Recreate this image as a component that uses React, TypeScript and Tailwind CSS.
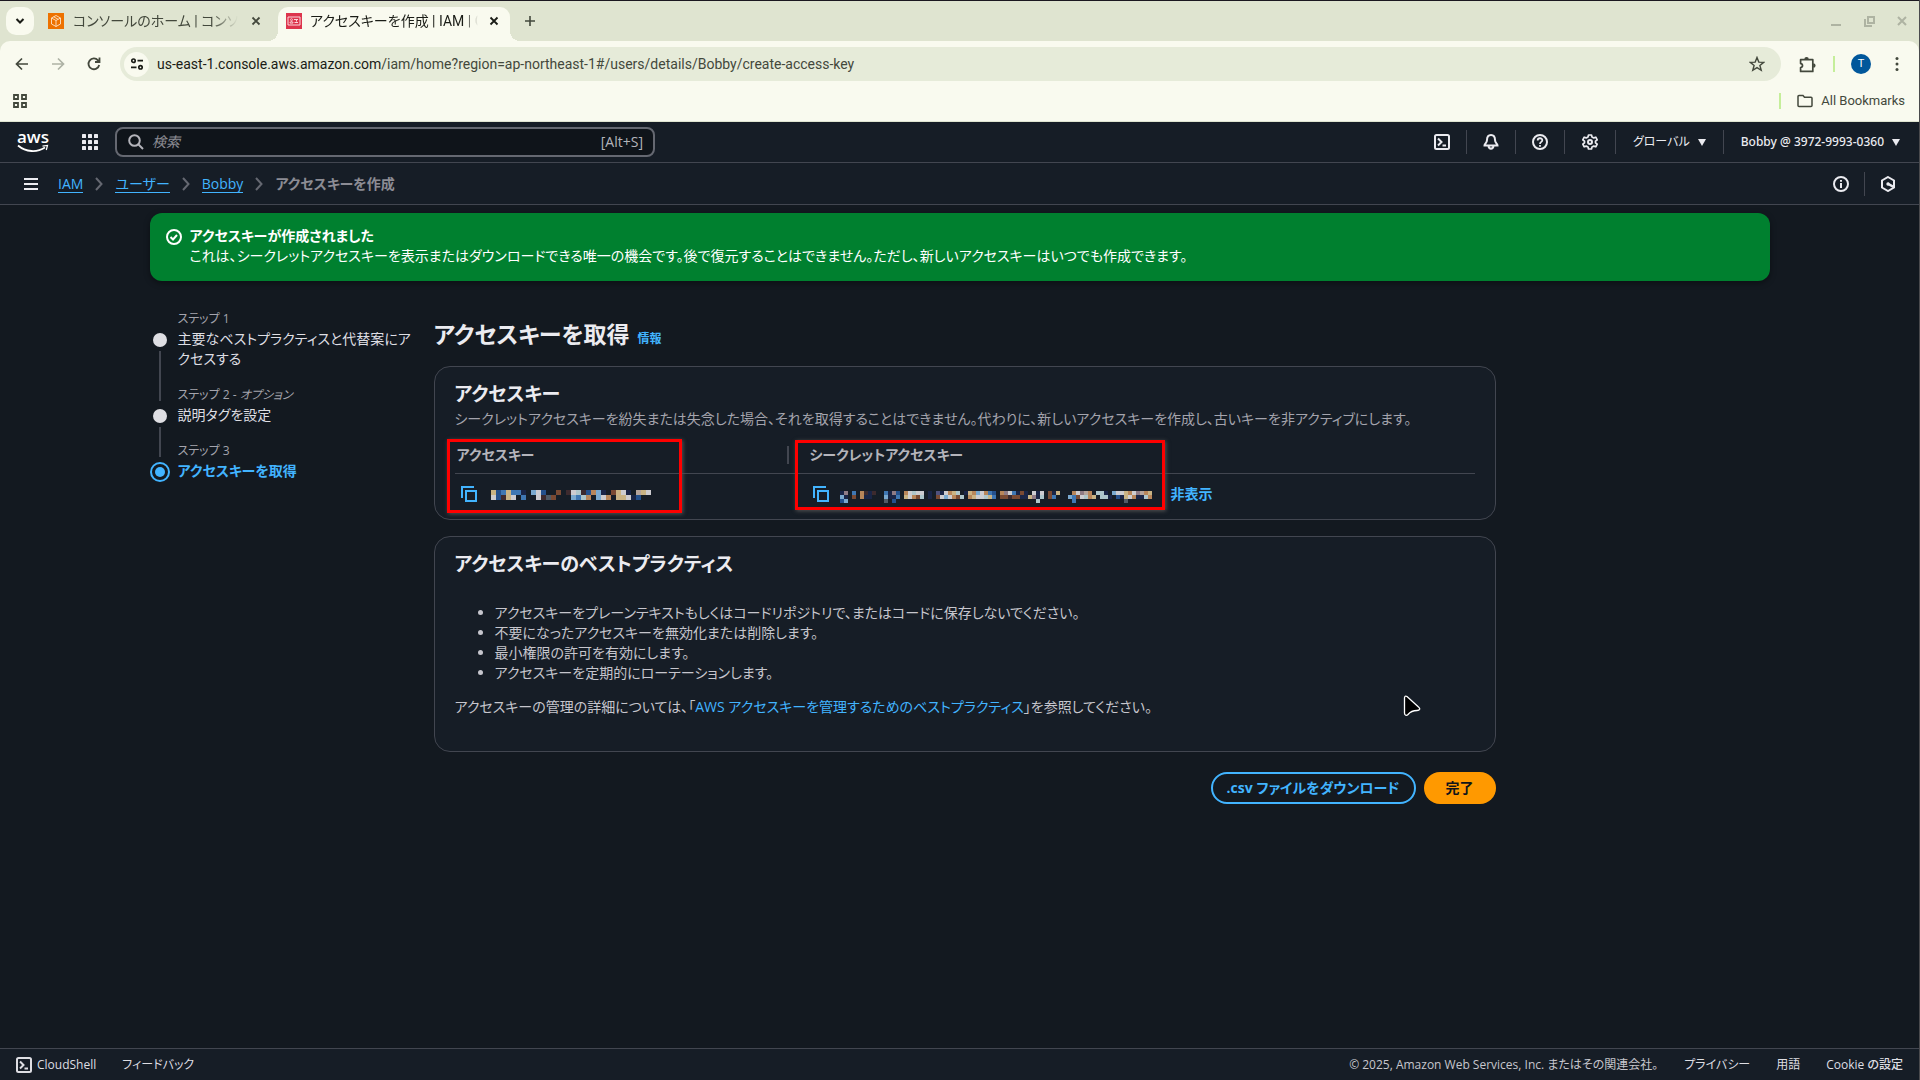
import React from 'react';

const P = {
  n: 'transparent', w: '#cdccd0', s: '#aec6cb', b: '#3f77b3', d: '#24508c', k: '#1a2547', r: '#3d2a2e',
  o: '#7a4a33', t: '#c9b384', c: '#b8865a', g: '#4f5a66', m: '#7aa9cf', v: '#8f7b85', u: '#50517d', p: '#b5a49c',
} as Record<string, string>;

const ACCESS = [
  'tdbtbbknmwdnnonrwsrdcmknotwknptw',
  'wdrtwnbnnwrgonnnmbscnmwcnttwkdnn',
];
const SECRET = [
  'kvnbncrkrnnbkvdncwswwnknukwctsnktcmwcbdncvwbkoknwkwnoktnnncwvpcnssknmwwtcwvpctn',
  'mknonckknnnmkkbntwcosnknowmwcosnctwwstbnoorookktvksnobnnnmbowsctnsskndktwckkscn',
  'dmnnnnnnnnngndnnnnnnnnnnnnnnnnnnnnnnnnnnnnnnnnnnnsnnnnnnnnbnnnnnnnnnnnngnnnnnnn',
];

function Mosaic({ rows, cell }: { rows: string[]; cell: number }) {
  const w = rows[0].length;
  return (
    <svg width={w * cell} height={rows.length * cell} shapeRendering="crispEdges" aria-hidden="true">
      {rows.map((r, y) => r.split('').map((ch, x) => (
        <rect key={x + '-' + y} x={x * cell} y={y * cell} width={cell} height={cell} fill={P[ch]} />
      )))}
    </svg>
  );
}

type IP = { children: React.ReactNode; className?: string; sw?: number };
function Icon({ children, className = 'size-4', sw = 2 }: IP) {
  return (
    <svg viewBox="0 0 16 16" className={className} fill="none" stroke="currentColor" strokeWidth={sw} aria-hidden="true">
      {children}
    </svg>
  );
}

const Shell = () => <Icon><rect x="1" y="1" width="14" height="14" rx="1.5" /><path d="M4 4.5 7.5 8 4 11.5M8.5 11.5H12" /></Icon>;
const Copy = () => <Icon><path d="M13 1H1v11" /><path d="M5 5h10v10H5z" /></Icon>;
const Close = ({ className }: { className?: string }) => <Icon className={className} sw={1.8}><path d="m4.500 4.500 7 7M11.500 4.500l-7 7" /></Icon>;
const Sep = () => <span className="h-6 w-px bg-[#424650]" />;
const Chevron = () => <Icon className="mx-2 size-4 text-[#656871]"><path d="m5 2 5.500 6L5 14" /></Icon>;
const Tri = () => <svg viewBox="0 0 8 7" className="h-[7px] w-2" fill="currentColor" aria-hidden="true"><path d="M0 0h8L4 7z" /></svg>;

function Browser() {
  return (
    <header className="font-['Roboto','Noto_Sans_CJK_JP',sans-serif] bg-[#dfe4d0] text-[#43483c]">
      <div className="h-px bg-[#1b1720]" />
      <div className="flex h-10 items-end">
        <button aria-label="タブを検索" className="mb-1.5 ml-1.5 flex h-7 w-7 items-center justify-center rounded-[10px] bg-[#f9faef] text-[#1a1c16]">
          <Icon className="size-4"><path d="m4.500 6 3.500 3.500L11.500 6" /></Icon>
        </button>
        <div className="flex h-[34px] w-[244px] items-center pb-1.5 pl-3.5 pt-0">
          <svg viewBox="0 0 16 16" className="size-4 shrink-0" aria-hidden="true"><rect width="16" height="16" fill="#ed7100" /><path d="M8 2.500 12.500 5v6L8 13.500 3.500 11V5zM3.500 5 8 7.500 12.500 5M8 7.500v6M5.700 3.800l4.500 2.500" fill="none" stroke="#fde3c8" strokeWidth=".9" /></svg>
          <span className="ml-[9px] w-[165px] overflow-hidden whitespace-nowrap text-sm [mask-image:linear-gradient(90deg,#000_84%,transparent)] [font-feature-settings:'palt']">コンソールのホーム | コンソール</span>
          <button aria-label="タブを閉じる" className="ml-2.5"><Close className="size-4" /></button>
        </div>
        <div className="relative flex h-[34px] w-[232px] items-center rounded-t-[10px] bg-[#f9faef] pb-1.5 pl-2 text-[#1a1c16]">
          <span className="absolute -left-2.5 bottom-0 size-2.5 bg-[radial-gradient(circle_at_0_0,transparent_10px,#f9faef_10px)]" />
          <span className="absolute -right-2.5 bottom-0 size-2.5 bg-[radial-gradient(circle_at_100%_0,transparent_10px,#f9faef_10px)]" />
          <svg viewBox="0 0 16 16" className="size-4 shrink-0" aria-hidden="true"><rect width="16" height="16" fill="#dd344c" /><path d="M2 4h12v8H2z" fill="none" stroke="#fbd5da" /><path d="M8 6.500h4M10.500 6.500v2M8.500 9.500h3.500M4 10c0-2 3-2 3 0z" fill="none" stroke="#fbd5da" /><circle cx="5.500" cy="6.700" r="1" fill="none" stroke="#fbd5da" strokeWidth=".8" /></svg>
          <span className="ml-2 w-[168px] overflow-hidden whitespace-nowrap text-sm [mask-image:linear-gradient(90deg,#000_92%,transparent)] [font-feature-settings:'palt']">アクセスキーを作成 | IAM | Global</span>
          <button aria-label="タブを閉じる" className="ml-2"><Close className="size-4" /></button>
        </div>
        <button aria-label="新しいタブ" className="mb-3 ml-3"><Icon className="size-4" sw={1.6}><path d="M8 3v10M3 8h10" /></Icon></button>
        <div className="mb-3 ml-auto mr-[9px] flex items-center gap-[17px] text-[#aeb3a2]">
          <button aria-label="最小化"><Icon><path d="M3 12h10" /></Icon></button>
          <button aria-label="元に戻す"><Icon><path d="M7 4h6v6H7zM4 6v7h7" /></Icon></button>
          <button aria-label="閉じる"><Icon><path d="m4 4 8 8M12 4l-8 8" /></Icon></button>
        </div>
      </div>
      <div className="rounded-t-[10px] border-b border-[#dfe4d0] bg-[#f9faef]">
        <div className="flex h-[46px] items-center pr-3.5 pt-0">
          <button aria-label="戻る" className="ml-3.5"><Icon sw={1.7}><path d="M14 8H3M8 2.500 2.500 8 8 13.500" /></Icon></button>
          <button aria-label="進む" className="ml-5 text-[#aeb2a5]"><Icon sw={1.7}><path d="M2 8h11M8 2.500 13.500 8 8 13.500" /></Icon></button>
          <button aria-label="再読み込み" className="ml-5"><Icon sw={1.8}><path d="M13.200 9A5.400 5.400 0 1 1 12 4.300l1 1M13.500 1.500V6H9" /></Icon></button>
          <div className="ml-[18px] flex h-[34px] flex-1 items-center rounded-full bg-[#e6ebd9] pl-1 pr-4">
            <span className="flex size-[25px] items-center justify-center rounded-full bg-[#f9faef] text-[#1a1c16]"><Icon className="size-4" sw={1.7}><circle cx="4.500" cy="4.700" r="1.700" /><path d="M8.500 4.700H14M2 11.300h5.500" /><circle cx="11.500" cy="11.300" r="1.700" /></Icon></span>
            <span className="ml-2 whitespace-nowrap text-sm text-[#1a1c16]">us-east-1.console.aws.amazon.com<span className="text-[#43483c]">/iam/home?region=ap-northeast-1#/users/details/Bobby/create-access-key</span></span>
            <button aria-label="ブックマークに追加" className="ml-auto"><Icon sw={1.400}><path d="m8 1.500 1.800 4.600 4.900.3-3.800 3.100 1.300 4.800L8 11.600l-4.200 2.700 1.300-4.800L1.300 6.400l4.900-.3z" /></Icon></button>
          </div>
          <button aria-label="拡張機能" className="ml-[18px]"><Icon className="size-[17px]" sw={1.600}><path d="M1.500 3.500H13v4.200V14.500H1.500v-3.600c2.400-.2 2.400-3.600 0-3.800z" strokeLinejoin="round" /><path d="M5.800 3a1.300 1.300 0 0 1 2.600 0M13.500 7.600a1.300 1.300 0 0 1 0 2.600" fill="currentColor" /></Icon></button>
          <span className="ml-[17px] h-4 w-0.5 bg-[#c5ee9a]" />
          <span className="ml-4 flex size-5 items-center justify-center rounded-full bg-[#01579b] text-[11px] text-white">T</span>
          <button aria-label="メニュー" className="ml-[18px]"><Icon><g fill="currentColor" stroke="none"><circle cx="8" cy="2.500" r="1.500" /><circle cx="8" cy="8" r="1.500" /><circle cx="8" cy="13.500" r="1.500" /></g></Icon></button>
        </div>
        <div className="flex h-[34px] items-center justify-between pb-1.5 pl-3 pr-[14px]">
          <button aria-label="アプリ"><Icon sw={1.800}><path d="M2 2h4v4H2zM10 2h4v4h-4zM2 10h4v4H2zM10 10h4v4h-4z" /></Icon></button>
          <div className="flex items-center">
            <span className="mr-4 h-4 w-0.5 bg-[#c5ee9a]" />
            <button className="flex items-center gap-2 whitespace-nowrap text-[13px]"><Icon className="size-4" sw={1.500}><path d="M1 3.500a1 1 0 0 1 1-1h4l1.500 1.800H14a1 1 0 0 1 1 1v7.200a1 1 0 0 1-1 1H2a1 1 0 0 1-1-1z" /></Icon>All Bookmarks</button>
          </div>
        </div>
      </div>
    </header>
  );
}

function AwsLogo() {
  return (
    <span className="flex w-8 flex-col items-center text-white">
      <span className="h-3 font-['Open_Sans'] text-[17px] font-semibold leading-[10px]">aws</span>
      <svg viewBox="0 0 32 9" className="h-[9px] w-8" fill="none" stroke="currentColor" strokeWidth="1.800" aria-hidden="true"><path d="M1 1.500c8 6.800 19 7.200 27 2" /><path d="M25.500 2.200 30.500 1.500 29.300 6" strokeWidth="1.200" /></svg>
    </span>
  );
}

function TopNav() {
  return (
    <nav className="flex h-[41px] items-center border-b border-[#424650] bg-[#161d26] pl-[17px] pr-[19px] text-[#ebebf0]">
      <a href="#home" aria-label="AWS"><AwsLogo /></a>
      <span className="ml-4"><Sep /></span>
      <button aria-label="サービス" className="ml-[17px]"><svg viewBox="0 0 16 16" className="size-4" fill="currentColor" aria-hidden="true">{[0, 6, 12].map((y) => [0, 6, 12].map((x) => <rect key={x + '-' + y} x={x} y={y} width="4" height="4" rx=".6" />))}</svg></button>
      <label className="ml-[17px] flex h-[30px] w-[540px] items-center rounded-lg border-2 border-[#656871] bg-[#0f141a] pl-[11px] pr-2.5 text-sm text-[#b4b4bb]">
        <Icon><circle cx="6.500" cy="6.500" r="5.300" /><path d="m10.500 10.500 4.500 4.500" /></Icon>
        <input aria-label="検索" placeholder="検索" className="ml-2 min-w-0 flex-1 bg-transparent outline-none placeholder:italic placeholder:text-[#8c8c94]" />
        <span>[Alt+S]</span>
      </label>
      <div className="ml-auto flex items-center text-xs font-medium">
        <button aria-label="CloudShell" className="mr-4"><Shell /></button><Sep />
        <button aria-label="通知" className="mx-4"><Icon><path d="M8 1C5 1 4 3.500 4 6c0 3-2.500 4-2.500 5.500h13C14.500 10 12 9 12 6c0-2.500-1-5-4-5z" /><path d="M5.500 12c.5 3.500 4.500 3.500 5 0" /></Icon></button><Sep />
        <button aria-label="サポート" className="mx-4"><Icon><circle cx="8" cy="8" r="7" /><path d="M5.700 6.500C5.700 3.500 10.300 3.600 10.300 6.300 10.300 8 8 7.800 8 10M8 11v1.700" strokeWidth="1.800" /></Icon></button><Sep />
        <button aria-label="設定" className="mx-[17px]"><Icon><path d="m6.500 1h3l.5 2 1.800.9 2-.7 1.400 2.600L13.500 7.200v1.600l1.700 1.400-1.400 2.600-2-.7L10 13l-.5 2h-3L6 13l-1.800-.9-2 .7L.8 10.200l1.700-1.400V7.200L.8 5.800l1.400-2.600 2 .7L6 3z" strokeLinejoin="round" strokeWidth="1.700" /><circle cx="8" cy="8" r="2" /></Icon></button><Sep />
        <button className="mx-[17px] flex items-center gap-2 font-normal">グローバル<Tri /></button><Sep />
        <button className="ml-[17px] flex items-center gap-2 whitespace-nowrap font-['Noto_Sans']">Bobby @ 3972-9993-0360<Tri /></button>
      </div>
    </nav>
  );
}

function Crumbs() {
  const link = 'border-b border-[#42b4ff] leading-[17px] text-[#42b4ff]';
  return (
    <div className="flex h-[42px] items-center border-b border-[#424650] bg-[#161d26] pl-[23px] pr-[23px] text-sm text-[#ebebf0]">
      <button aria-label="ナビゲーション"><Icon><path d="M1 3h14M1 8h14M1 13h14" /></Icon></button>
      <nav aria-label="パンくずリスト" className="ml-[19px] flex items-center">
        <a href="#iam" className={link}>IAM</a><Chevron />
        <a href="#users" className={link}>ユーザー</a><Chevron />
        <a href="#bobby" className={link}>Bobby</a><Chevron />
        <span className="font-semibold text-[#8c8c94]">アクセスキーを作成</span>
      </nav>
      <div className="ml-auto flex items-center gap-[15px]">
        <button aria-label="情報"><Icon><circle cx="8" cy="8" r="7" /><path d="M8 7v5M8 4v1.800" /></Icon></button>
        <Sep />
        <button aria-label="アシスタント"><Icon><path d="m8 1 6 3.500v7L8 15l-6-3.500v-7z" /><path d="M7.500 7.500l6 3.300" strokeWidth="2.500" /><circle cx="8" cy="8" r="1.700" fill="currentColor" stroke="none" /></Icon></button>
      </div>
    </div>
  );
}

function Step({ n, note, title, current, last }: { n: number; note?: string; title: string; current?: boolean; last?: boolean }) {
  return (
    <li className="flex gap-2">
      <div className="flex w-5 flex-col items-center pt-5">
        {current
          ? <span className="mt-px flex size-5 shrink-0 items-center justify-center rounded-full border-2 border-[#42b4ff]"><span className="size-2.5 rounded-full bg-[#42b4ff]" /></span>
          : <span className="my-1 size-3.5 shrink-0 rounded-full bg-[#dedee3]" />}
        {!last && <span className="-mb-4 w-0.5 flex-1 bg-[#424650]" />}
      </div>
      <div className={last ? 'flex-1' : 'flex-1 pb-4'}>
        <div className="text-xs leading-5 text-[#a4a4ad]">ステップ {n}{note && <> - <i>{note}</i></>}</div>
        <div className={current ? 'text-sm leading-5 font-bold text-[#42b4ff]' : 'text-sm leading-5 text-[#dedee3]'}>{title}</div>
      </div>
    </li>
  );
}

const card = 'rounded-2xl border border-[#424650] bg-[#161d26] px-5';

function KeyCard() {
  return (
    <section className={card + ' h-[154px] pt-[15px]'}>
      <h2 className="text-[19px] font-bold leading-6 text-[#ebebf0]">アクセスキー</h2>
      <p className="mt-[3px] text-sm leading-5 text-[#a4a4ad]">シークレットアクセスキーを紛失または失念した場合、それを取得することはできません。代わりに、新しいアクセスキーを作成し、古いキーを非アクティブにします。</p>
      <div className="relative mt-2">
        <table className="w-full table-fixed text-left text-sm">
          <thead>
            <tr className="h-9 border-b border-[#424650] text-[#b4b4bb]">
              <th className="w-[334px] p-0 pl-0.5"><span className="flex h-[18px] items-center border-r-2 border-[#424650] font-bold">アクセスキー</span></th>
              <th className="p-0 pl-[21px] font-bold">シークレットアクセスキー</th>
            </tr>
          </thead>
          <tbody>
            <tr className="h-[42px] text-[#42b4ff]">
              <td className="p-0 pl-1.5"><div className="flex items-center gap-3.5"><button aria-label="アクセスキーをコピー"><Copy /></button><span className="mt-0.5"><Mosaic rows={ACCESS} cell={5} /></span></div></td>
              <td className="p-0 pl-6"><div className="flex items-center"><button aria-label="シークレットアクセスキーをコピー"><Copy /></button><span className="ml-[11px] mt-1.5"><Mosaic rows={SECRET} cell={4} /></span><button className="ml-[15px] font-bold">非表示</button></div></td>
            </tr>
          </tbody>
        </table>
        <span className="absolute -left-2 top-0.5 h-[74px] w-[235px] border-[3px] border-[#ff0000] shadow-[1px_1px_4px_#555]" />
        <span className="absolute left-[340px] top-[3px] h-[70px] w-[370px] border-[3px] border-[#ff0000] shadow-[1px_1px_4px_#555]" />
      </div>
    </section>
  );
}

export default function App() {
  return (
    <div className="flex min-h-screen flex-col border-r border-[#4a4a4d] bg-[#131920]">
      <Browser />
      <div className="flex flex-1 flex-col font-['Open_Sans','Noto_Sans_CJK_JP',sans-serif] [font-feature-settings:'palt']">
        <TopNav />
        <Crumbs />
        <main className="mx-auto w-full max-w-[1620px] flex-1">
          <div role="status" className="mt-2 flex h-[68px] gap-2 rounded-xl bg-[#00802f] px-4 pt-[13px] text-sm leading-5 text-white shadow-[0_2px_6px_#0006]">
            <Icon className="mt-[3px] size-4 shrink-0"><circle cx="8" cy="8" r="7" /><path d="m4.500 8 2.500 2.500L11 6" /></Icon>
            <div><div className="font-bold">アクセスキーが作成されました</div><div>これは、シークレットアクセスキーを表示またはダウンロードできる唯一の機会です。後で復元することはできません。ただし、新しいアクセスキーはいつでも作成できます。</div></div>
          </div>
          <div className="mt-7 flex">
            <ol className="w-[264px] shrink-0">
              <Step n={1} title="主要なベストプラクティスと代替案にアクセスする" />
              <Step n={2} note="オプション" title="説明タグを設定" />
              <Step n={3} title="アクセスキーを取得" current last />
            </ol>
            <div className="ml-5 w-full max-w-[1062px]">
              <div className="flex items-baseline gap-2 pt-2"><h1 className="text-[23px] font-bold leading-[34px] text-[#ebebf0]">アクセスキーを取得</h1><a href="#info" className="text-xs font-bold text-[#42b4ff]">情報</a></div>
              <div className="mt-[15px]"><KeyCard /></div>
              <section className={card + ' relative mt-4 h-[216px] pt-[15px] text-sm leading-5 text-[#c6c6cd]'}>
                <h2 className="text-[19px] font-bold leading-6 text-[#ebebf0]">アクセスキーのベストプラクティス</h2>
                <ul className="mt-[27px] list-disc pl-10">
                  <li>アクセスキーをプレーンテキストもしくはコードリポジトリで、またはコードに保存しないでください。</li>
                  <li>不要になったアクセスキーを無効化または削除します。</li>
                  <li>最小権限の許可を有効にします。</li>
                  <li>アクセスキーを定期的にローテーションします。</li>
                </ul>
                <p className="mt-3.5">アクセスキーの管理の詳細については、「<a href="#docs" className="text-[#42b4ff]">AWS アクセスキーを管理するためのベストプラクティス</a>」を参照してください。</p>
                <svg viewBox="0 0 18 22" className="absolute right-[74px] top-[158px] h-[22px] w-[18px]" aria-hidden="true"><path d="M1.500 3v15c0 2.500 2 3 3.500 1.500 2-2.500 4-4 9-4 3 0 3.500-2 1.500-3.500L4 1.500C2.500.5 1.500 1.200 1.500 3z" fill="#000" stroke="#fff" strokeWidth="1.300" /></svg>
              </section>
              <div className="mt-5 flex justify-end gap-2 text-sm font-bold">
                <button className="h-8 rounded-full border-2 border-[#42b4ff] px-3.5 text-[#42b4ff]">.csv ファイルをダウンロード</button>
                <button className="h-8 rounded-full bg-[#ff9900] px-[22px] text-[#0f141a]">完了</button>
              </div>
            </div>
          </div>
        </main>
        <footer className="flex h-8 items-center border-t border-[#424650] bg-[#161d26] pl-4 pr-4 text-xs text-[#dedee3]">
          <button className="flex items-center gap-[5px] font-medium"><Shell />CloudShell</button>
          <a href="#feedback" className="ml-[26px]">フィードバック</a>
          <span className="ml-auto text-[#c6c6cd]">© 2025, Amazon Web Services, Inc. またはその関連会社。</span>
          <a href="#privacy" className="ml-[26px]">プライバシー</a>
          <a href="#terms" className="ml-[26px]">用語</a>
          <a href="#cookie" className="ml-[26px] font-medium">Cookie の設定</a>
        </footer>
      </div>
    </div>
  );
}
